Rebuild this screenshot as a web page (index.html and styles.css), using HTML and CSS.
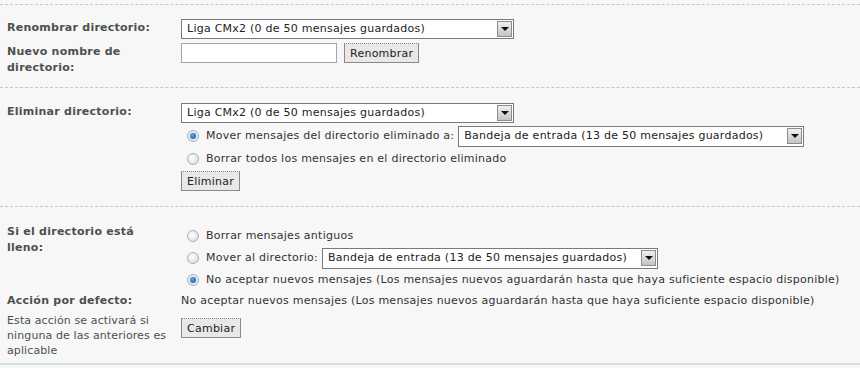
FILE: index.html
```html
<!DOCTYPE html>
<html lang="es">
<head>
    <meta charset="UTF-8">
    <meta name="viewport" content="width=device-width, initial-scale=1.0">
    <title>Directorios</title>
    <link rel="stylesheet" href="styles.css">
</head>
<body>
    <div class="panel">

        <!-- Renombrar -->
        <div class="section sec-rename">
            <div class="label">Renombrar directorio:</div>
            <div class="field">
                <div class="select w-dir">
                    <span class="select-text">Liga CMx2 (0 de 50 mensajes guardados)</span>
                    <span class="select-arrow"></span>
                </div>
            </div>
            <div class="label">Nuevo nombre de directorio:</div>
            <div class="field inline">
                <input class="text-input" type="text">
                <button class="btn">Renombrar</button>
            </div>
        </div>

        <!-- Eliminar -->
        <div class="section sec-delete">
            <div class="label">Eliminar directorio:</div>
            <div class="field stack">
                <div class="select w-dir">
                    <span class="select-text">Liga CMx2 (0 de 50 mensajes guardados)</span>
                    <span class="select-arrow"></span>
                </div>
                <div class="option tall">
                    <span class="radio checked"></span>
                    <span>Mover mensajes del directorio eliminado a:</span>
                    <div class="select w-inbox">
                        <span class="select-text">Bandeja de entrada (13 de 50 mensajes guardados)</span>
                        <span class="select-arrow"></span>
                    </div>
                </div>
                <div class="option">
                    <span class="radio"></span>
                    <span>Borrar todos los mensajes en el directorio eliminado</span>
                </div>
                <div><button class="btn">Eliminar</button></div>
            </div>
        </div>

        <!-- Directorio lleno -->
        <div class="section sec-full">
            <div class="label">Si el directorio está lleno:</div>
            <div class="field stack options">
                <div class="option">
                    <span class="radio"></span>
                    <span>Borrar mensajes antiguos</span>
                </div>
                <div class="option tall">
                    <span class="radio"></span>
                    <span>Mover al directorio:</span>
                    <div class="select w-inbox2">
                        <span class="select-text">Bandeja de entrada (13 de 50 mensajes guardados)</span>
                        <span class="select-arrow"></span>
                    </div>
                </div>
                <div class="option">
                    <span class="radio checked"></span>
                    <span>No aceptar nuevos mensajes (Los mensajes nuevos aguardarán hasta que haya suficiente espacio disponible)</span>
                </div>
            </div>

            <div class="label label-default">
                Acción por defecto:
                <span class="hint">Esta acción se activará si ninguna de las anteriores es aplicable</span>
            </div>
            <div class="field stack default">
                <div class="plain">No aceptar nuevos mensajes (Los mensajes nuevos aguardarán hasta que haya suficiente espacio disponible)</div>
                <div><button class="btn">Cambiar</button></div>
            </div>
        </div>

    </div>
</body>
</html>
```

FILE: styles.css
```css
body {
    margin: 0;
    background-color: #f7f7f7;
    font-family: "DejaVu Sans", Verdana, sans-serif;
    font-size: 11px;
    letter-spacing: 0.25px;
    color: #333;
}

.panel {
    margin-top: 4px;
    border-top: 1px dashed #c6c6c6;
    border-bottom: 2px solid #d2e2e0;
    height: 361px;
    box-sizing: border-box;
}

.section {
    display: grid;
    grid-template-columns: 181px 1fr;
    row-gap: 4px;
    border-bottom: 1px dashed #c6c6c6;
}

.section:last-child {
    border-bottom: none;
}

.sec-rename {
    padding: 14px 0 11px;
}

.sec-delete {
    padding: 15px 0 15px;
}

.sec-full {
    padding: 16px 0 0;
    row-gap: 3px;
}

.label {
    padding: 1px 11px 0 7px;
    font-weight: bold;
    line-height: 16px;
    color: #4b514e;
}

.label .hint {
    display: block;
    margin-top: 4px;
    font-weight: normal;
    line-height: 15px;
    letter-spacing: 0.1px;
}

.label-default {
    padding-top: 0;
}

.field {
    line-height: 16px;
}

.inline {
    display: flex;
    align-items: flex-start;
    gap: 7px;
}

.stack {
    display: flex;
    flex-direction: column;
    align-items: flex-start;
    gap: 2px;
}

.options {
    padding-top: 3px;
    gap: 1px;
}

.default {
    gap: 9px;
}

/* desplegables */
.select {
    display: flex;
    align-items: center;
    height: 20px;
    box-sizing: border-box;
    border: 1px solid #7a7a7a;
    background-color: #fff;
    color: #222;
}

.select-text {
    flex: 1;
    padding-left: 5px;
    white-space: nowrap;
}

.select-arrow {
    position: relative;
    width: 15px;
    height: 16px;
    margin-right: 1px;
    box-sizing: border-box;
    border: 1px solid #8c8c8c;
    background: linear-gradient(#f0f0f0, #c4c4c4);
}

.select-arrow::after {
    content: "";
    position: absolute;
    left: 3px;
    top: 5px;
    border-left: 4px solid transparent;
    border-right: 4px solid transparent;
    border-top: 4px solid #111;
}

.w-dir {
    width: 333px;
}

.w-inbox {
    width: 346px;
    height: 21px;
    margin-left: 4px;
}

.w-inbox2 {
    width: 336px;
    height: 21px;
    margin-left: 4px;
}

.text-input {
    width: 156px;
    height: 20px;
    box-sizing: border-box;
    margin: 0;
    border: 1px solid #a5a5a5;
    background-color: #fff;
}

.btn {
    height: 20px;
    padding: 0 5px;
    margin: 0;
    font-family: inherit;
    font-size: 11px;
    letter-spacing: 0.25px;
    color: #222;
    background-color: #e8e8e8;
    border: 1px solid #8a8a8a;
    border-top: 1px dotted #8a8a8a;
}

/* opciones */
.option {
    display: flex;
    align-items: center;
    height: 20px;
    padding-left: 6px;
    white-space: nowrap;
}

.option.tall {
    height: 22px;
}

.radio {
    position: relative;
    width: 12px;
    height: 12px;
    margin-right: 7px;
    border-radius: 50%;
    box-sizing: border-box;
    border: 1px solid #b0b0b0;
    background: radial-gradient(circle at 40% 40%, #fff, #d6d6d6);
    flex-shrink: 0;
}

.radio.checked {
    border-color: #9fb3c8;
    background: #e2eaf2;
}

.radio.checked::after {
    content: "";
    position: absolute;
    left: 2px;
    top: 2px;
    width: 6px;
    height: 6px;
    border-radius: 50%;
    background: radial-gradient(circle at 40% 40%, #6fa4d4, #174d86);
}

.plain {
    line-height: 16px;
}
```
